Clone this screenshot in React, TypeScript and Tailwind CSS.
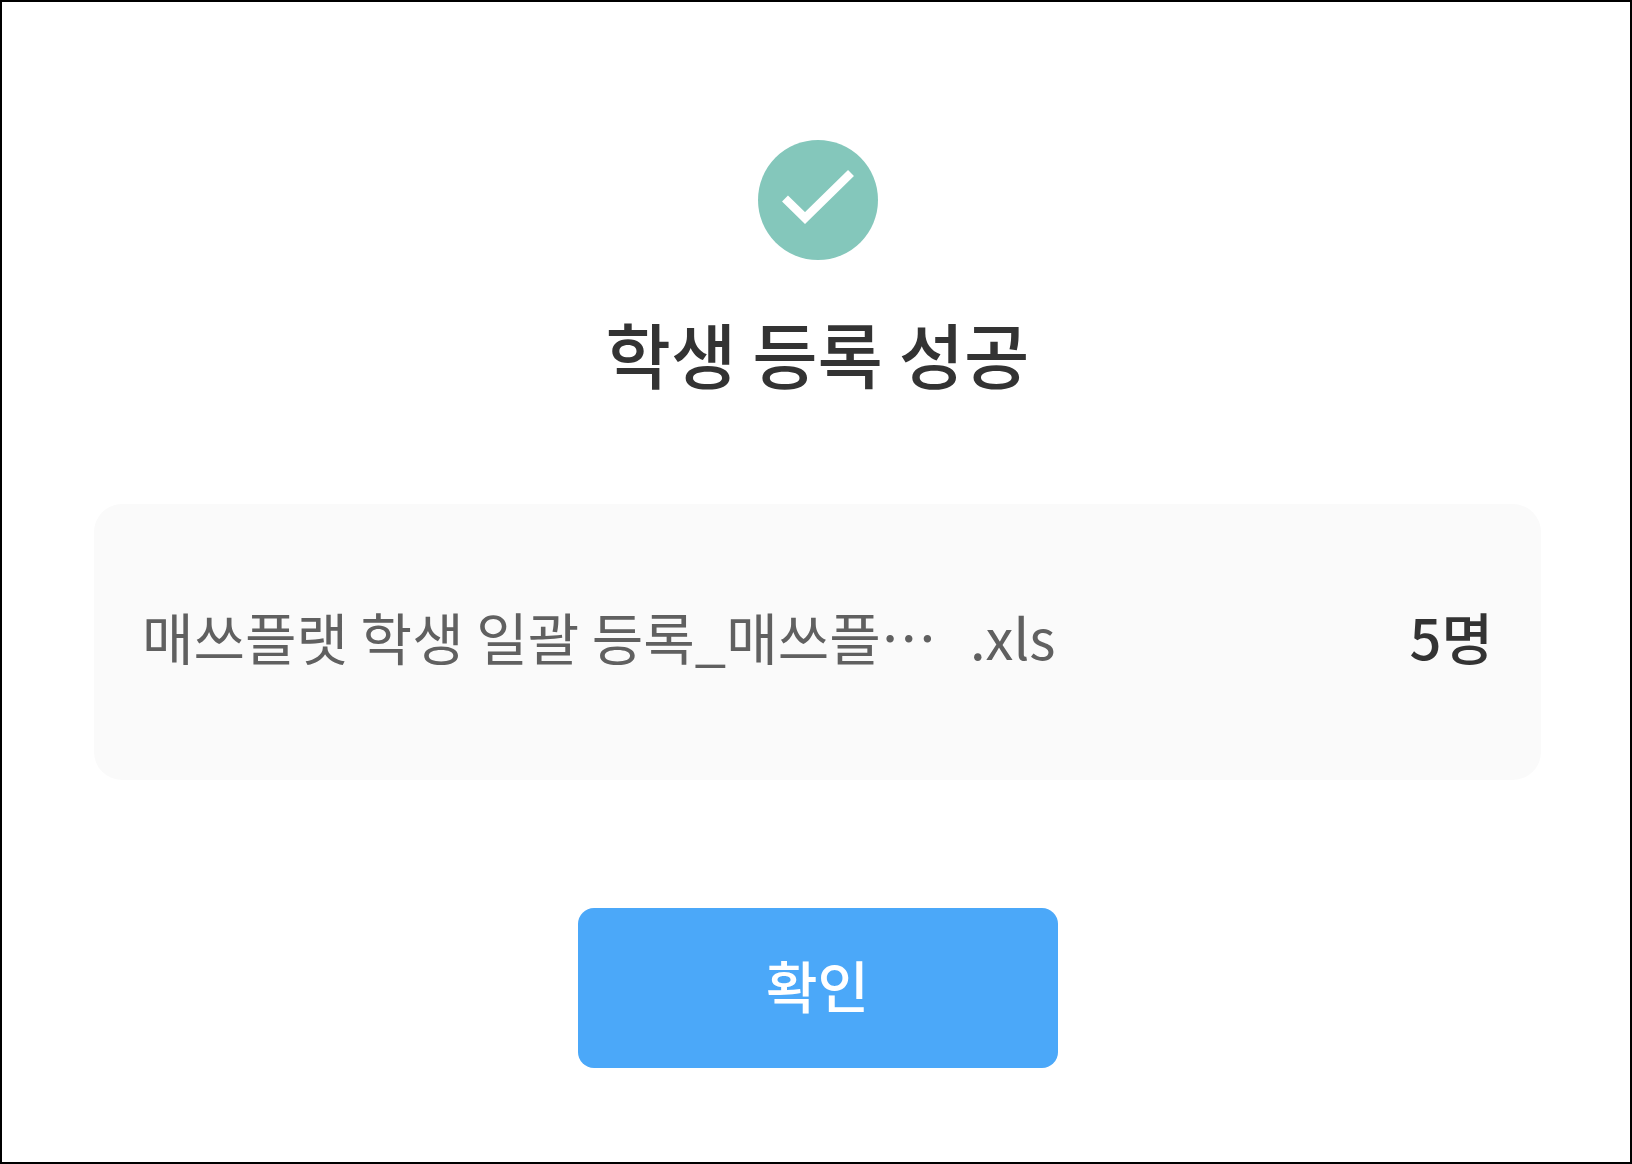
export default function App() {
  const file = { name: "매쓰플랫 학생 일괄 등록_매쓰플…", ext: ".xls", count: 5 }

  return (
    <main className="min-h-screen border-2 border-black bg-white pt-[138px] pr-[89px] pb-20 pl-[92px] font-['Noto_Sans_CJK_KR',sans-serif]">
      <div className="flex flex-col items-center">
        <svg className="size-[120px]" viewBox="0 0 120 120" aria-hidden="true">
          <circle cx="60" cy="60" r="60" fill="#84c7bb" />
          <path d="M27 58.500L47 78L93 33" fill="none" stroke="#fff" strokeWidth="8.500" />
        </svg>

        <h1 className="mt-[42px] text-[71px] leading-[100px] font-medium text-[#333]">학생 등록 성공</h1>

        {/* Uploaded file */}
        <div className="mt-[102px] flex h-[276px] w-full items-center justify-between rounded-[28px] bg-[#fafafa] px-12 pb-3 text-[56px] leading-[80px]">
          <div className="flex gap-2 text-[#606060]">
            <span className="w-[820px] whitespace-nowrap">{file.name}</span>
            <span>{file.ext}</span>
          </div>
          <strong className="font-medium text-[#333]">{file.count}명</strong>
        </div>

        <button
          type="button"
          className="mt-32 h-40 w-[480px] rounded-2xl bg-[#4ba8f9] pb-2 text-[56px] leading-[80px] font-medium text-white"
        >
          확인
        </button>
      </div>
    </main>
  )
}
